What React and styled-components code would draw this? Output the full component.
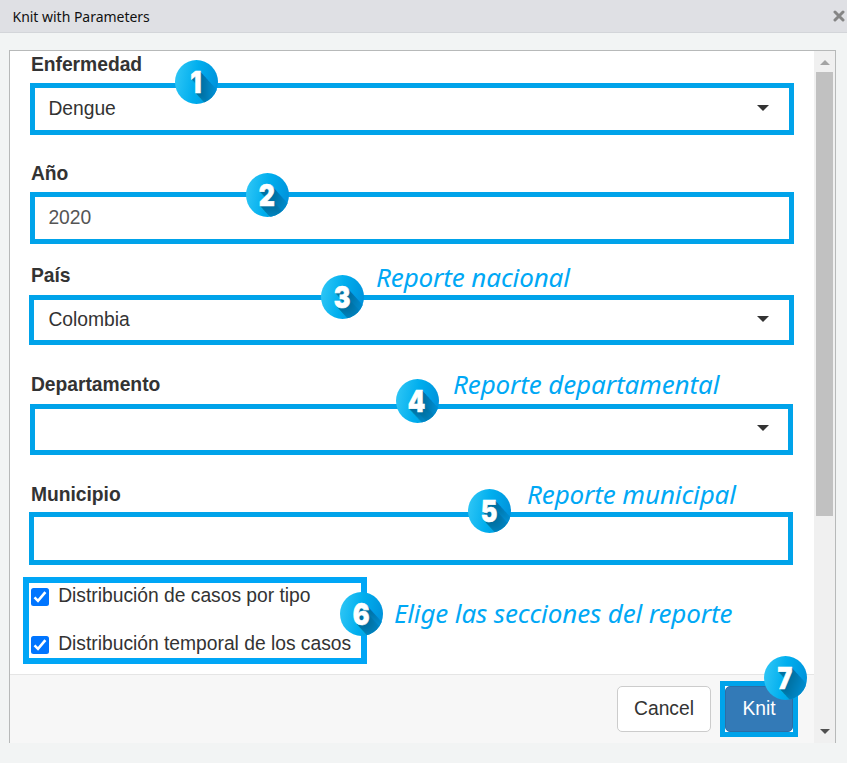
import React from "react";
import styled, { createGlobalStyle } from "styled-components";

const GlobalStyle = createGlobalStyle`
  * { box-sizing: border-box; }
  html, body { margin: 0; padding: 0; background: #f2f4f4; overflow: hidden; }
`;

const Dialog = styled.div`
  width: 847px;
  height: 763px;
  display: flex;
  flex-direction: column;
  background: #f2f4f4;
  font-family: "Liberation Sans", Arial, sans-serif;
  font-size: 19.3px;
  letter-spacing: -0.02px;
  color: #333;
`;

const TitleBar = styled.header`
  height: 33px;
  flex: none;
  display: flex;
  align-items: center;
  justify-content: space-between;
  padding: 0 2px 0 12px;
  background: #dfe0e4;
  border-bottom: 1px solid #d3d5d9;
`;

const Title = styled.h1`
  margin: 0;
  padding: 2px 0 0 0.5px;
  font: 400 14px/20px "Noto Sans", "Open Sans", sans-serif;
  letter-spacing: -0.02px;
  color: #111;
  white-space: nowrap;
`;

const CloseIcon = styled.svg`
  width: 12px;
  height: 12px;
  display: block;
`;

const Panel = styled.div`
  margin: 17px 11px 0 9px;
  height: 693px;
  flex: none;
  display: flex;
  background: #fff;
  border: 1px solid #b7b9b9;
  border-bottom: 0;
`;

const Content = styled.main`
  flex: 1;
  display: flex;
  flex-direction: column;
`;

const Form = styled.form`
  height: 623px;
  flex: none;
`;

const Field = styled.section`
  margin: ${(p) => p.$gap}px 0 0 0;
`;

const Label = styled.label`
  display: block;
  height: ${(p) => p.$height}px;
  padding-left: 20.9px;
  line-height: 27px;
  font-weight: 700;
  white-space: nowrap;
`;

const Control = styled.div`
  position: relative;
  display: flex;
  align-items: center;
  justify-content: space-between;
  margin-left: ${(p) => p.$left - 10}px;
  width: ${(p) => p.$right - p.$left}px;
  height: ${(p) => p.$height}px;
  padding: 0 20px 0 ${(p) => 43.4 - p.$left}px;
  border: 5px solid #00a3ea;
  white-space: nowrap;
`;

const Value = styled.span`
  color: ${(p) => (p.$muted ? "#555" : "#333")};
`;

const Caret = styled.i`
  margin: 0 ${(p) => p.$inset}px 3px auto;
  border: 6px solid transparent;
  border-top-color: #333;
  border-bottom: 0;
`;

const Disc = styled.span`
  position: absolute;
  left: ${(p) => p.$x}px;
  top: ${(p) => p.$y}px;
  z-index: 2;
  width: 43px;
  height: 44px;
  border-radius: 50%;
  overflow: hidden;
  display: flex;
  align-items: center;
  justify-content: center;
  background: linear-gradient(100deg, #2fc6f5 4%, #00aeee 48%, #0093dc 92%);
`;

const longShadow = Array.from({ length: 26 }, (_, i) => {
  const t = Math.min(1, i / 19);
  const g = Math.round(112 + t * 38);
  const b = Math.round(160 + t * 62);
  return `${(i + 1) * 1.1}px ${i + 1}px 0 rgb(0, ${g}, ${b})`;
}).join(", ");

const Digit = styled.b`
  font: 900 30px/44px Inter, sans-serif;
  color: #fff;
  -webkit-text-stroke: 0.6px #fff;
  transform: scaleX(0.83);
  text-shadow: ${longShadow};
`;

const Note = styled.span`
  position: absolute;
  left: ${(p) => p.$x}px;
  top: ${(p) => p.$y}px;
  font: italic 400 26px/36px "Noto Sans", "Open Sans", sans-serif;
  letter-spacing: -0.12px;
  color: #00a8f5;
  white-space: nowrap;
`;

const Options = styled.div`
  position: relative;
  display: flex;
  flex-direction: column;
  gap: 22px;
  width: 344px;
  height: 87px;
  margin: 12px 0 0 13px;
  padding: 0 0 0 2px;
  border: 6px solid #00a6f6;
`;

const Option = styled.label`
  display: flex;
  align-items: center;
  gap: 9.2px;
  height: 26px;
  white-space: nowrap;
`;

const CheckSvg = styled.svg`
  width: 18px;
  height: 18px;
  margin-top: 2px;
  flex: none;
`;

const Footer = styled.footer`
  flex: 1;
  display: flex;
  align-items: flex-start;
  justify-content: flex-end;
  gap: 9px;
  padding: 6px 16px 0 0;
  background: #f7f7f7;
  border-top: 1px solid #e5e5e5;
`;

const Button = styled.button`
  width: ${(p) => p.$width}px;
  height: 46px;
  padding: 0;
  font: inherit;
  color: ${(p) => (p.$primary ? "#fff" : "#333")};
  background: ${(p) => (p.$primary ? "#337ab7" : "#fff")};
  border: 1px solid ${(p) => (p.$primary ? "#2e6da4" : "#ccc")};
  border-radius: 5px;
`;

const CancelButton = styled(Button)`
  margin-top: 5px;
`;

const Highlight = styled.div`
  position: relative;
  width: 78px;
  height: 56px;
  border: 5px solid #00a3ea;
  background: #fff;
`;

const Scrollbar = styled.div`
  width: 21px;
  flex: none;
  display: flex;
  flex-direction: column;
  align-items: center;
  padding: 9px 0;
  background: #f0f0f0;
`;

const UpArrow = styled.i`
  border: 5px solid transparent;
  border-bottom-color: #a3a3a3;
  border-top: 0;
`;

const Thumb = styled.div`
  width: 17px;
  height: 444px;
  margin-top: 7px;
  background: #c1c1c1;
`;

const DownArrow = styled.i`
  margin-top: auto;
  border: 5px solid transparent;
  border-top-color: #505050;
  border-bottom: 0;
`;

const Badge = ({ n, x, y }) => (
  <Disc $x={x} $y={y}>
    <Digit>{n}</Digit>
  </Disc>
);

const Checkbox = () => (
  <CheckSvg viewBox="0 0 18 18">
    <rect width="18" height="18" rx="2.5" fill="#0075ff" />
    <path d="M3.5 9.4 7 12.9 14.4 4.2" fill="none" stroke="#fff" strokeWidth="2.6" />
  </CheckSvg>
);

export default function App() {
  return (
    <>
      <GlobalStyle />
      <Dialog>
        <TitleBar>
          <Title>Knit with Parameters</Title>
          <CloseIcon viewBox="0 0 12 12">
            <path d="M2 2 10 10M10 2 2 10" stroke="#858585" strokeWidth="3" strokeLinecap="round" />
          </CloseIcon>
        </TitleBar>
        <Panel>
          <Content>
            <Form>
              <Field $gap={0}>
                <Label $height={32}>Enfermedad</Label>
                <Control $left={30} $right={794} $height={52}>
                  <Value>Dengue</Value>
                  <Caret $inset={0} />
                  <Badge n="1" x={139.5} y={-28} />
                </Control>
              </Field>
              <Field $gap={25}>
                <Label $height={32}>Año</Label>
                <Control $left={30} $right={794} $height={52}>
                  <Value $muted>2020</Value>
                  <Badge n="2" x={210.5} y={-24} />
                </Control>
              </Field>
              <Field $gap={18}>
                <Label $height={33}>País</Label>
                <Control $left={29} $right={794} $height={50}>
                  <Value>Colombia</Value>
                  <Caret $inset={0} />
                  <Badge n="3" x={286.5} y={-25} />
                  <Note $x={342} $y={-41}>Reporte nacional</Note>
                </Control>
              </Field>
              <Field $gap={26}>
                <Label $height={33}>Departamento</Label>
                <Control $left={30} $right={793} $height={51}>
                  <Caret $inset={-1} />
                  <Badge n="4" x={360.5} y={-30} />
                  <Note $x={418} $y={-43}>Reporte departamental</Note>
                </Control>
              </Field>
              <Field $gap={26}>
                <Label $height={31}>Municipio</Label>
                <Control $left={29} $right={793} $height={53}>
                  <Badge n="5" x={433.5} y={-28} />
                  <Note $x={493} $y={-41}>Reporte municipal</Note>
                </Control>
              </Field>
              <Options>
                <Option>
                  <Checkbox />
                  Distribución de casos por tipo
                </Option>
                <Option>
                  <Checkbox />
                  Distribución temporal de los casos
                </Option>
                <Badge n="6" x={310.5} y={9} />
                <Note $x={365} $y={12}>Elige las secciones del reporte</Note>
              </Options>
            </Form>
            <Footer>
              <CancelButton type="button" $width={94}>Cancel</CancelButton>
              <Highlight>
                <Button type="button" $primary $width={68}>Knit</Button>
                <Badge n="7" x={38.5} y={-30} />
              </Highlight>
            </Footer>
          </Content>
          <Scrollbar>
            <UpArrow />
            <Thumb />
            <DownArrow />
          </Scrollbar>
        </Panel>
      </Dialog>
    </>
  );
}
